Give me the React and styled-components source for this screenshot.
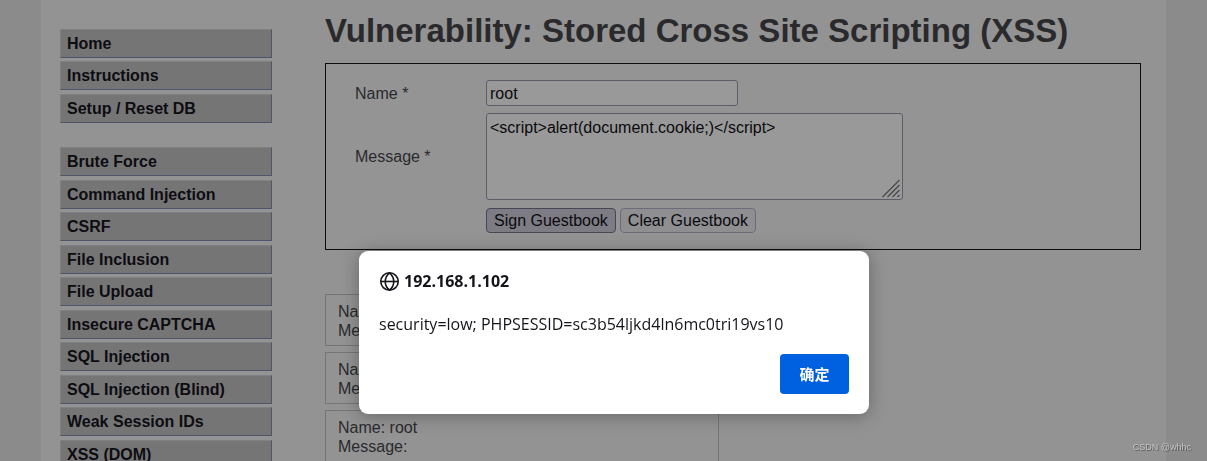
import React from 'react'
import styled, { createGlobalStyle } from 'styled-components'

const GlobalStyle = createGlobalStyle`
  * {
    box-sizing: border-box;
  }
  body {
    margin: 0;
    background: #8b8b8c;
    color: #2a2a2c;
    font-family: "Liberation Sans", Arial, sans-serif;
    font-size: 16px;
    line-height: 19px;
  }
`

const Page = styled.div`
  height: 100vh;
  padding: 0 41px;
  overflow: hidden;
`

const Container = styled.div`
  min-height: 100%;
  display: flex;
  gap: 53px;
  padding: 0 25px 0 19px;
  background: #939394;
`

const Menu = styled.ul`
  flex: 0 0 212px;
  margin: 0;
  padding: 29px 0 0;
  list-style: none;
`

const MenuItem = styled.li`
  margin-top: ${props => (props.$newGroup ? '24px' : '0')};
  margin-bottom: 3px;

  &:nth-child(even) {
    margin-bottom: 4px;
  }
`

const MenuLink = styled.a`
  display: block;
  height: 29px;
  padding: 4px 6px;
  border: 1px solid;
  border-color: #808081 #50546a #50546a #808081;
  background: #757576;
  color: #0d0c11;
  font-weight: 700;
  text-decoration: none;
`

const Main = styled.main`
  flex: 1;
  min-width: 0;
`

const Title = styled.h1`
  margin: 0;
  padding: 11px 0 12px;
  font-size: 33px;
  line-height: 40px;
  white-space: nowrap;
`

const Form = styled.form`
  display: grid;
  grid-template-columns: 131px 1fr;
  row-gap: 7px;
  align-items: center;
  justify-items: start;
  padding: 16px 29px;
  border: 1px solid #0c0c0d;
  background: #949495;
`

const NameInput = styled.input`
  width: 252px;
  height: 26px;
  padding: 1px 3px 0;
  border: 1px solid #5f5c6a;
  border-radius: 3px;
  background: #99999a;
  color: #0a0a0c;
  font: inherit;
`

const MessageBox = styled.div`
  position: relative;
  width: 417px;
  height: 87px;
`

const MessageInput = styled.textarea`
  display: block;
  width: 100%;
  height: 100%;
  padding: 4px 3px;
  border: 1px solid #5f5c6a;
  border-radius: 3px;
  background: #99999a;
  color: #0a0a0c;
  font: inherit;
  resize: none;
`

const Grip = styled.svg`
  position: absolute;
  right: 2px;
  bottom: 2px;
`

const Buttons = styled.div`
  grid-column: 2;
  display: flex;
  gap: 4px;
  padding-top: 1px;
`

const Button = styled.button`
  height: 25px;
  padding: 0 7px;
  border: 1px solid ${props => (props.$active ? '#484656' : '#6d6b79')};
  border-radius: 4px;
  background: ${props => (props.$active ? '#7d7c84' : '#8f8f92')};
  color: #0a0a0c;
  font: inherit;
`

const Comments = styled.div`
  display: flex;
  flex-direction: column;
  gap: 6px;
  width: 394px;
  padding-top: 44px;
`

const Comment = styled.div`
  padding: 7px 12px 5px;
  border: 1px solid #757577;
`

const Overlay = styled.div`
  position: fixed;
  inset: 0;
  display: flex;
  justify-content: center;
  align-items: flex-start;
  padding: 251px 0 0 21px;
`

const Dialog = styled.div`
  width: 510px;
  padding: 19px 20px 20px;
  border-radius: 9px;
  background: #fff;
  color: #15141a;
  box-shadow: 0 2px 18px rgba(0, 0, 0, 0.3);
  font-family: "Open Sans", "Noto Sans CJK SC", sans-serif;
  font-size: 16px;
  line-height: 22px;
`

const DialogTitle = styled.h2`
  display: flex;
  align-items: center;
  gap: 4px;
  margin: 0;
  font-size: 16px;
  line-height: 22px;
`

const DialogText = styled.p`
  margin: 21px 0 19px;
`

const DialogActions = styled.div`
  display: flex;
  justify-content: flex-end;
`

const OkButton = styled.button`
  width: 69px;
  height: 40px;
  padding: 0 0 2px;
  border: 0;
  border-radius: 4px;
  background: #0061e0;
  color: #fbfbfe;
  font-family: "Noto Sans CJK SC", sans-serif;
  font-size: 15px;
  font-weight: 700;
`

const Watermark = styled.div`
  position: fixed;
  right: 16px;
  bottom: 7px;
  color: #c4c4c6;
  font-size: 9px;
  line-height: 14px;
  text-shadow: 1px 1px 0 #5c5c5e;
`

const menu = [
  { label: 'Home' },
  { label: 'Instructions' },
  { label: 'Setup / Reset DB' },
  { label: 'Brute Force', newGroup: true },
  { label: 'Command Injection' },
  { label: 'CSRF' },
  { label: 'File Inclusion' },
  { label: 'File Upload' },
  { label: 'Insecure CAPTCHA' },
  { label: 'SQL Injection' },
  { label: 'SQL Injection (Blind)' },
  { label: 'Weak Session IDs' },
  { label: 'XSS (DOM)' },
]

const comments = [
  { name: 'root', message: '' },
  { name: 'root', message: '' },
  { name: 'root', message: '' },
]

const GlobeIcon = () => (
  <svg width="21" height="20" viewBox="0 0 21 20" fill="none" stroke="#15141a" strokeWidth="1.6" aria-hidden="true">
    <circle cx="10.5" cy="10.5" r="8.7" />
    <path d="M10.5 1.8C4.8 6.5 4.8 14.5 10.5 19.2C16.2 14.5 16.2 6.5 10.5 1.8Z" />
    <path d="M1.8 10.5H19.2" />
  </svg>
)

const App = () => {
  return (
    <>
      <GlobalStyle />
      <Page>
        <Container>
          <Menu>
            {menu.map(item => (
              <MenuItem key={item.label} $newGroup={item.newGroup}>
                <MenuLink href="#">{item.label}</MenuLink>
              </MenuItem>
            ))}
          </Menu>
          <Main>
            <Title>Vulnerability: Stored Cross Site Scripting (XSS)</Title>
            <Form onSubmit={e => e.preventDefault()}>
              <label htmlFor="name">Name *</label>
              <NameInput id="name" type="text" defaultValue="root" />
              <label htmlFor="message">Message *</label>
              <MessageBox>
                <MessageInput id="message" spellCheck={false} defaultValue="<script>alert(document.cookie;)</script>" />
                <Grip width="19" height="19" viewBox="0 0 19 19" stroke="#49494c" strokeWidth="1.3" aria-hidden="true">
                  <path d="M0.5 18L17.5 1M5.5 18L17.5 6M10.5 18L17.5 11M15.5 18L17.5 16" />
                </Grip>
              </MessageBox>
              <Buttons>
                <Button type="submit" $active>Sign Guestbook</Button>
                <Button type="button">Clear Guestbook</Button>
              </Buttons>
            </Form>
            <Comments>
              {comments.map((comment, i) => (
                <Comment key={i}>
                  Name: {comment.name}<br />
                  Message: {comment.message}
                </Comment>
              ))}
            </Comments>
          </Main>
        </Container>
      </Page>
      <Overlay>
        <Dialog role="alertdialog" aria-labelledby="dialog-title" aria-describedby="dialog-text">
          <DialogTitle id="dialog-title">
            <GlobeIcon />
            192.168.1.102
          </DialogTitle>
          <DialogText id="dialog-text">security=low; PHPSESSID=sc3b54ljkd4ln6mc0tri19vs10</DialogText>
          <DialogActions>
            <OkButton type="button">确定</OkButton>
          </DialogActions>
        </Dialog>
      </Overlay>
      <Watermark>CSDN @whhc</Watermark>
    </>
  )
}

export default App
